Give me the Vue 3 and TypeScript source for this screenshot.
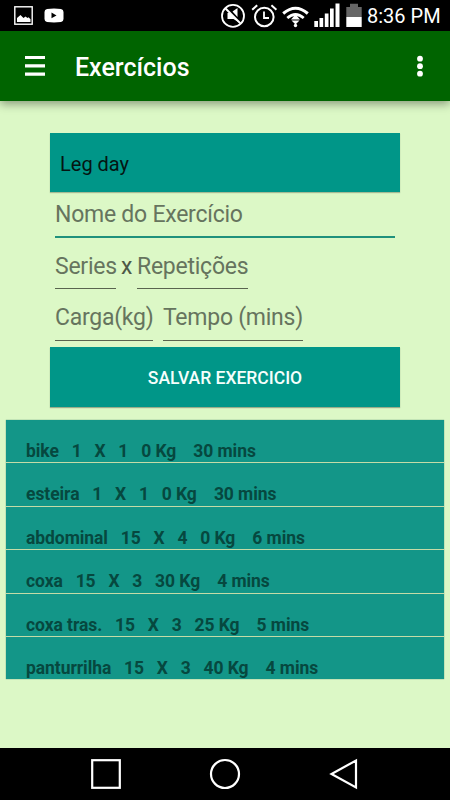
<script setup lang="ts">
interface Exercise {
  name: string
  series: number
  reps: number
  load: number
  minutes: number
}

const exercises: Exercise[] = [
  { name: 'bike', series: 1, reps: 1, load: 0, minutes: 30 },
  { name: 'esteira', series: 1, reps: 1, load: 0, minutes: 30 },
  { name: 'abdominal', series: 15, reps: 4, load: 0, minutes: 6 },
  { name: 'coxa', series: 15, reps: 3, load: 30, minutes: 4 },
  { name: 'coxa tras.', series: 15, reps: 3, load: 25, minutes: 5 },
  { name: 'panturrilha', series: 15, reps: 3, load: 40, minutes: 4 },
]

const describe = (e: Exercise): string =>
  `${e.name}   ${e.series}   X   ${e.reps}   ${e.load} Kg    ${e.minutes} mins`
</script>

<template>
  <div class="screen">
    <div class="status">
      <svg class="status-left" width="66" height="31" viewBox="0 0 66 31">
        <rect x="14.8" y="6.8" width="17.4" height="17.4" fill="none" stroke="#fff" stroke-width="1.4" />
        <path d="M17 22v-4l3.500-3 3 3 2-1.500 2 1.500 1-.7 2 2V22z" fill="#fff" />
        <path d="M47 9q7-.8 14 0 2.500.3 2.500 3v7q0 2.700-2.500 3-7 .8-14 0-2.500-.3-2.500-3v-7q0-2.700 2.500-3z" fill="#fff" />
        <path d="M51.500 12.500v5.800l5-2.900z" fill="#000" />
      </svg>
      <svg class="status-right" width="154" height="31" viewBox="210 0 154 31">
        <g fill="none" stroke="#fff" stroke-width="1.800">
          <circle cx="233" cy="15.900" r="11" />
          <path d="M225.300 8.200l15.400 15.400" stroke-width="2" />
          <circle cx="264.300" cy="17" r="9.300" stroke-width="2" />
          <path d="M264 11.500V18h5" />
          <path d="M252.200 9.700l5-4.500M276.400 9.700l-5-4.500" stroke-width="2" />
          <path d="M283.200 13.500q12.300-10.500 24.600 0" stroke-width="3" />
          <path d="M287.300 18q8.200-7 16.400 0" stroke-width="2.800" />
        </g>
        <path d="M227.500 13h2.500l9 9v.5L233.500 19h-6zM232.500 11.500l5-3.500v9z" fill="#fff" />
        <path d="M291 19.500l4.500-5 4.500 5zM291.500 20.500h8l-4 4z" fill="#fff" />
        <circle cx="295.500" cy="25.500" r="1.700" fill="#fff" />
        <path d="M314.300 21h3.700v6h-3.700zM319.500 18h3.700v9h-3.700zM324.800 13.500h3.700V27h-3.700zM330 8.500h3.700V27H330zM335.500 3.500h4V27h-4z" fill="#fff" />
        <path d="M350 3.700h8V7h3.700v10H346.300V7h3.700z" fill="#666" />
        <path d="M346.300 17h15.400v10H346.300z" fill="#fff" />
      </svg>
      <span class="clock">8:36 PM</span>
    </div>

    <header class="bar">
      <svg class="menu" width="20" height="22" viewBox="0 0 20 22">
        <path d="M0 1h20v3H0zM0 9.200h20v3.200H0zM0 17.500h20v3.200H0z" fill="#fff" />
      </svg>
      <h1>Exercícios</h1>
      <svg class="more" width="6" height="22" viewBox="0 0 6 22">
        <circle cx="3" cy="3.700" r="2.900" fill="#fff" />
        <circle cx="3" cy="11.200" r="2.900" fill="#fff" />
        <circle cx="3" cy="18.700" r="2.900" fill="#fff" />
      </svg>
    </header>

    <main>
      <form class="form" @submit.prevent>
        <div class="select"><span>Leg day</span></div>
        <div class="line first"><div class="field wide"><span>Nome do Exercício</span></div></div>
        <div class="line second">
          <div class="field series"><span>Series</span></div>
          <span class="times">x</span>
          <div class="field reps"><span>Repetições</span></div>
        </div>
        <div class="line third">
          <div class="field load"><span>Carga(kg)</span></div>
          <div class="field time"><span>Tempo (mins)</span></div>
        </div>
        <button type="submit">SALVAR EXERCICIO</button>
      </form>

      <ul class="list">
        <li v-for="e in exercises" :key="e.name"><span>{{ describe(e) }}</span></li>
      </ul>
    </main>

    <nav>
      <svg width="32" height="32" viewBox="0 0 32 32"><rect x="2.200" y="2.200" width="27.600" height="27.600" /></svg>
      <svg width="32" height="32" viewBox="0 0 32 32"><circle cx="16" cy="16" r="14" /></svg>
      <svg width="32" height="32" viewBox="0 0 32 32"><path d="M28 2.500v27L3.500 16z" /></svg>
    </nav>
  </div>
</template>

<style>
body {
  margin: 0;
  overflow: hidden;
}
</style>

<style scoped>
.screen {
  width: 450px;
  height: 800px;
  display: flex;
  flex-direction: column;
  background: #dcf8c6;
  font-family: Roboto, "Liberation Sans", sans-serif;
  overflow: hidden;
}
.status {
  height: 31px;
  flex: none;
  display: flex;
  background: #000;
  color: #fff;
}
.status svg {
  flex: none;
}
.status-right {
  margin-left: 144px;
}
.clock {
  margin-left: 3px;
  font-size: 20px;
  line-height: 33px;
  white-space: nowrap;
}
.bar {
  height: 70px;
  flex: none;
  box-sizing: border-box;
  padding: 0 27px 0 25px;
  display: flex;
  align-items: center;
  background: #006400;
  box-shadow: 0 3px 9px rgba(0, 0, 0, 0.38);
  color: #fff;
}
.bar h1 {
  flex: 1;
  margin: 4px 0 0 30px;
  font-size: 25px;
  line-height: 30px;
  font-weight: 500;
}
main {
  flex: 1;
  padding: 32px 6px 0;
}
.form {
  width: 350px;
  margin: 0 auto;
}
.select {
  height: 59px;
  padding-left: 10px;
  display: flex;
  align-items: center;
  background: #009688;
  box-shadow: 0 1px 1px rgba(0, 0, 0, 0.25);
  font-size: 20px;
  color: #051512;
}
.select span {
  padding-top: 2px;
}
.line {
  display: flex;
  padding-left: 5px;
  font-size: 23px;
  letter-spacing: -0.250px;
  line-height: 27px;
  color: #66745e;
  white-space: nowrap;
}
.field {
  box-sizing: border-box;
  border-bottom: 1px solid #59644f;
}
.first {
  padding-top: 9px;
}
.first .field {
  width: 340px;
  height: 37px;
  border-bottom: 2px solid #20917c;
}
.second {
  padding-top: 15px;
}
.second .field {
  height: 36px;
}
.series {
  width: 61px;
}
.times {
  width: 21px;
  padding-left: 5px;
  box-sizing: border-box;
  color: #4d5946;
}
.reps {
  width: 111px;
}
.third {
  padding-top: 15px;
}
.third .field {
  height: 37px;
}
.load {
  width: 98px;
  margin-right: 10px;
}
.time {
  width: 140px;
}
button {
  display: block;
  width: 350px;
  height: 60px;
  margin: 6px 0 0;
  padding: 2px 0 0;
  border: 0;
  background: #009688;
  box-shadow: 0 1px 1px rgba(0, 0, 0, 0.3);
  color: #f5fffc;
  font: 500 17.500px Roboto, "Liberation Sans", sans-serif;
}
.list {
  list-style: none;
  margin: 13px 0 0;
  padding: 0;
  height: 259px;
  background: #139688;
  box-shadow: 0 0 1px rgba(0, 90, 70, 0.7);
}
.list li {
  box-sizing: border-box;
  height: 43.500px;
  padding: 21px 0 0 20px;
  border-bottom: 1px solid #c5dba7;
  font-size: 17.500px;
  letter-spacing: -0.070px;
  line-height: 21px;
  font-weight: 700;
  color: #06483f;
  white-space: pre;
}
.list li:first-child {
  height: 43px;
}
.list li:last-child {
  border-bottom: 0;
}
nav {
  height: 52px;
  flex: none;
  display: flex;
  justify-content: center;
  align-items: center;
  gap: 87px;
  background: #000;
}
nav svg {
  fill: none;
  stroke: #fff;
  stroke-width: 2.200;
}
</style>
